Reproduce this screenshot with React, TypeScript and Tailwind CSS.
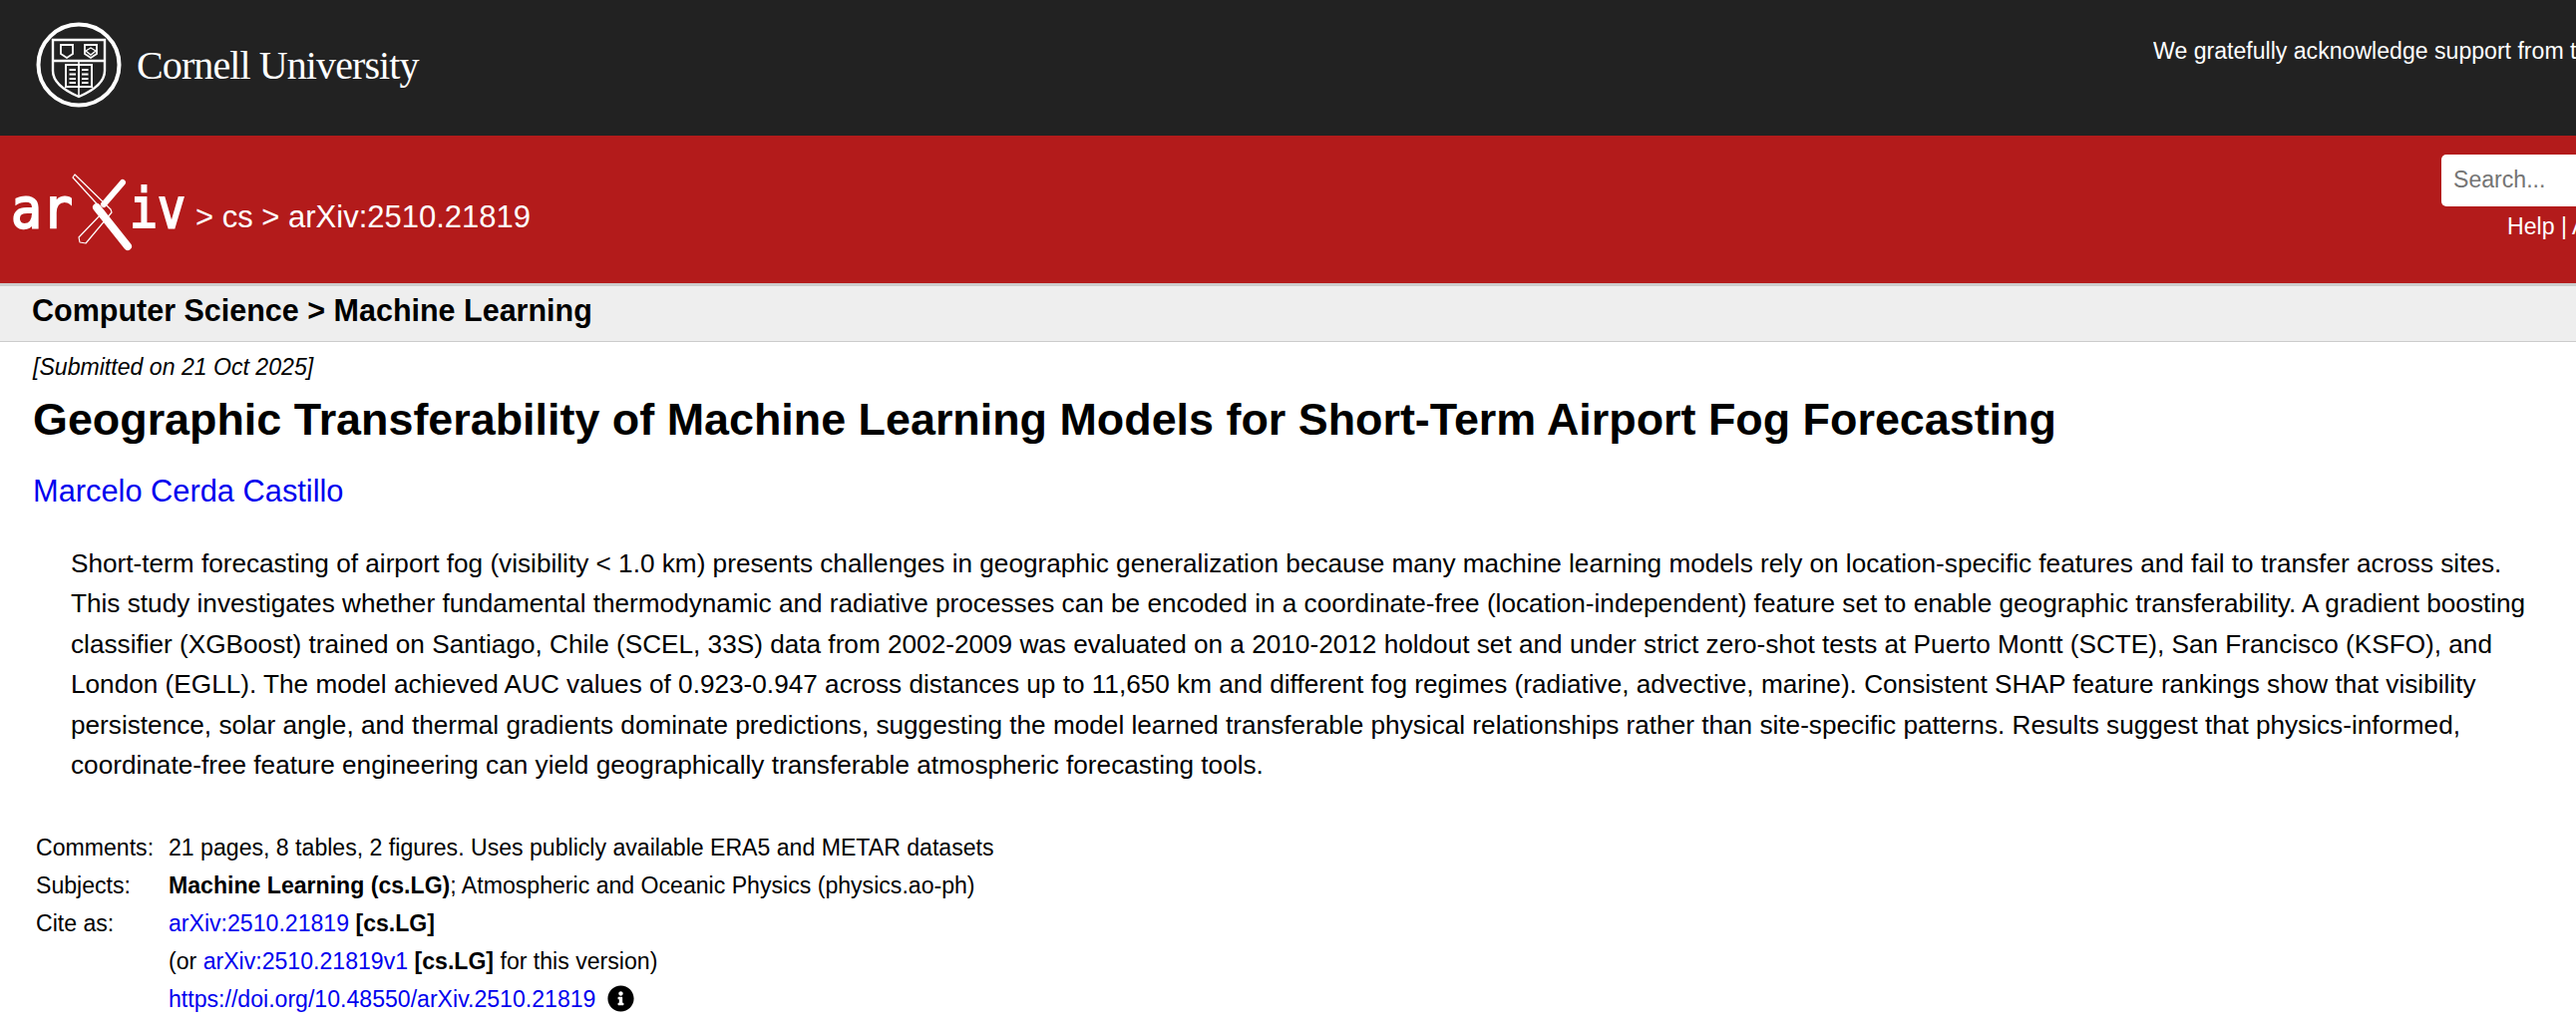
import React from 'react';
import { FaInfoCircle } from 'react-icons/fa';

const sans = "font-['Liberation_Sans',Arial,sans-serif]";

function CornellLogo() {
    return (
        <svg width="88" height="88" viewBox="0 0 88 88" fill="none" stroke="white" className="shrink-0">
            <circle cx="44" cy="44" r="40.5" strokeWidth="4" />
            {/* shield */}
            <path d="M18 19H70V50C70 62 58 70 44 76C30 70 18 62 18 50Z" strokeWidth="2.4" />
            <path d="M18 40H70" strokeWidth="2.4" />
            <path d="M44 40V76" strokeWidth="1.6" />
            {/* small crests */}
            <path d="M26 24H38V33L32 37L26 33Z" strokeWidth="1.8" />
            <path d="M50 24H62V33L56 37L50 33Z" strokeWidth="1.8" />
            <path d="M51 30L56 27L61 30L56 34Z" strokeWidth="1.4" />
            {/* open book */}
            <rect x="31" y="44" width="26" height="22" fill="#222222" strokeWidth="2" />
            <path d="M44 44V66" strokeWidth="2" />
            <path d="M34.5 49H41M34.5 53.5H41M34.5 58H41M34.5 62H41M47 49H53.5M47 53.5H53.5M47 58H53.5M47 62H53.5" strokeWidth="2" />
        </svg>
    );
}

function ArxivLogo() {
    return (
        <svg width="200" height="90" viewBox="0 0 200 90" className="shrink-0 -mr-[14px]">
            <text x="11" y="66" fill="white" stroke="white" strokeWidth="2" fontFamily="'DejaVu Sans Mono', monospace" fontSize="55" textLength="62" lengthAdjust="spacingAndGlyphs">ar</text>
            <text x="130" y="66" fill="white" stroke="white" strokeWidth="2" fontFamily="'DejaVu Sans Mono', monospace" fontSize="55" textLength="56" lengthAdjust="spacingAndGlyphs">iv</text>
            {/* the X: a thin outlined blade and a solid one */}
            <path d="M75 13L111 48L112 51L86 82L80 81L79 76L104 50L73 16Z" fill="#b31b1b" stroke="white" strokeWidth="1.2" strokeLinejoin="round" />
            <path d="M123 21L104 43" stroke="white" strokeWidth="6" strokeLinecap="round" />
            <path d="M97 46L128 85" stroke="white" strokeWidth="8" strokeLinecap="round" />
        </svg>
    );
}

export default function App() {
    return (
        <div className={`${sans} w-[2583px] h-[1029px] overflow-hidden bg-white text-black`}>
            {/* Cornell banner */}
            <div className="flex h-[136px] bg-[#222222] text-white">
                <div className="flex items-center pl-[35px] pb-[7px] gap-[14px]">
                    <CornellLogo />
                    <span className="font-['Liberation_Serif',serif] text-[40px] leading-none tracking-[-0.9px] mt-[2px]">Cornell University</span>
                </div>
                <div className="ml-auto w-[424px] shrink-0 overflow-hidden whitespace-nowrap pt-[37px] text-[23.1px] leading-[28px]">
                    We gratefully acknowledge support from the Simons Foundation
                </div>
            </div>

            {/* arXiv header */}
            <div className="flex h-[151px] bg-[#b31b1b] border-b-[3px] border-[#cccccc] text-white">
                <div className="flex items-center pb-[6px]">
                    <ArxivLogo />
                    <span className="ml-[10px] text-[31px] leading-none mt-[20px]">&gt; cs &gt; arXiv:2510.21819</span>
                </div>
                <div className="ml-auto w-[135px] shrink-0 overflow-hidden whitespace-nowrap pt-[19px]">
                    <input placeholder="Search..." className="block w-[200px] h-[52px] rounded-[5px] bg-white pl-[12px] pb-[2px] text-[23.1px] text-black outline-none placeholder:text-[#757575]" />
                    <div className="pl-[66px] text-[23.1px] leading-[28px] mt-[6px]">Help | Advanced Search</div>
                </div>
            </div>

            {/* subject line */}
            <div className="h-[56px] bg-[#eeeeee] border-b border-[#cccccc] pl-[32px] pb-[7px] flex items-center">
                <h1 className="text-[30.5px] font-bold leading-none">Computer Science &gt; Machine Learning</h1>
            </div>

            {/* abstract */}
            <div className="pl-[33px] pr-[40px]">
                <div className="italic text-[23.1px] leading-[26px] pt-[12px]">[Submitted on 21 Oct 2025]</div>
                <h2 className="text-[44.87px] font-bold leading-[52px] mt-[14px]">Geographic Transferability of Machine Learning Models for Short-Term Airport Fog Forecasting</h2>
                <div className="text-[30.8px] leading-[36px] mt-[28px] text-[#0000ee]">Marcelo Cerda Castillo</div>
                <p className="ml-[38px] text-[26.18px] leading-[40.4px] mt-[34px]">
                    Short-term forecasting of airport fog (visibility &lt; 1.0 km) presents challenges in geographic generalization because many machine learning models rely on location-specific features and fail to transfer across sites.
                    This study investigates whether fundamental thermodynamic and radiative processes can be encoded in a coordinate-free (location-independent) feature set to enable geographic transferability. A gradient boosting classifier (XGBoost) trained on Santiago, Chile (SCEL, 33S) data from 2002-2009 was evaluated on a 2010-2012 holdout set and under strict zero-shot tests at Puerto Montt (SCTE), San Francisco (KSFO), and London (EGLL). The model achieved AUC values of 0.923-0.947 across distances up to 11,650 km and different fog regimes (radiative, advective, marine). Consistent SHAP feature rankings show that visibility persistence, solar angle, and thermal gradients dominate predictions, suggesting the model learned transferable physical relationships rather than site-specific patterns. Results suggest that physics-informed, coordinate-free feature engineering can yield geographically transferable atmospheric forecasting tools.
                </p>

                {/* metadata */}
                <div className="grid grid-cols-[133px_1fr] pl-[3px] mt-[45px] text-[23.1px] leading-[37.9px]">
                    <div>Comments:</div>
                    <div>21 pages, 8 tables, 2 figures. Uses publicly available ERA5 and METAR datasets</div>
                    <div>Subjects:</div>
                    <div><b>Machine Learning (cs.LG)</b>; Atmospheric and Oceanic Physics (physics.ao-ph)</div>
                    <div>Cite as:</div>
                    <div><span className="text-[#0000ee]">arXiv:2510.21819</span> <b>[cs.LG]</b></div>
                    <div />
                    <div>(or <span className="text-[#0000ee]">arXiv:2510.21819v1</span> <b>[cs.LG]</b> for this version)</div>
                    <div />
                    <div className="flex items-center">
                        <span className="text-[#0000ee]">https://doi.org/10.48550/arXiv.2510.21819</span>
                        <FaInfoCircle className="ml-[12px] mb-[3px] size-[27px]" />
                    </div>
                </div>
            </div>
        </div>
    );
}
